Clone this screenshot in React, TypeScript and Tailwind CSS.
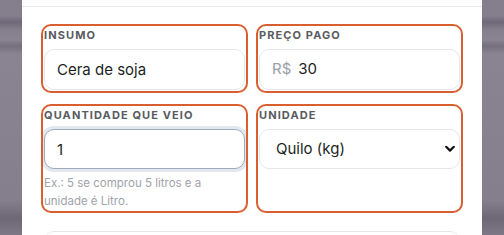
import { useState } from 'react'

const font = { fontFamily: 'Inter, "Noto Sans", sans-serif' }

function Chevron() {
  return (
    <svg width="10" height="7" viewBox="0 0 10 7" className="pointer-events-none absolute right-[5px] top-1/2 -translate-y-1/2">
      <path d="M1.2 1.3 5 5.1 8.8 1.3" fill="none" stroke="#111" strokeWidth="2.2" strokeLinecap="round" strokeLinejoin="round" />
    </svg>
  )
}

export default function App() {
  const [insumo, setInsumo] = useState('Cera de soja')
  const [preco, setPreco] = useState('30')
  const [qtd, setQtd] = useState('1')
  const [unidade, setUnidade] = useState('kg')

  const fieldBox = 'rounded-[7px] outline-[2.5px] outline-offset-[1.5px] outline-[#d95f30]'
  const labelCls = 'block text-[11px] leading-4 font-bold tracking-[0.1em] text-[#585b61] uppercase mb-[6px]'
  const inputCls =
    'h-[41px] w-full rounded-[10px] border border-[#e6e7ea] bg-white px-[12px] text-[15px] text-[#1c1f24] outline-none'

  return (
    <div
      style={font}
      className="h-[235px] w-[504px] overflow-hidden bg-[linear-gradient(180deg,#857e8c_0px,#857e8c_16px,#6f6879_22px,#857e8c_30px,#8a8391_40px,#75707d_46px,#8a8391_54px,#857e8c_200px,#6e6876_218px,#7f7886_235px)]"
    >
      <div className="mx-[22px] h-full bg-white">
        <div className="h-[7px] border-b border-[#e8e9ec]" />
        <div className="px-[22px] pt-[20px]">
          <div className="grid grid-cols-2 gap-x-[14px] gap-y-[17px]">
            <div className={fieldBox}>
              <label className={labelCls}>Insumo</label>
              <input className={inputCls} value={insumo} onChange={(e) => setInsumo(e.target.value)} />
            </div>

            <div className={fieldBox}>
              <label className={labelCls}>Preço pago</label>
              <div className="flex h-[41px] items-center rounded-[10px] border border-[#e6e7ea] bg-white px-[12px] text-[15px]">
                <span className="mr-[7px] text-[#9a9ea6]">R$</span>
                <input
                  className="w-full text-[#1c1f24] outline-none"
                  value={preco}
                  onChange={(e) => setPreco(e.target.value)}
                />
              </div>
            </div>

            <div className={fieldBox}>
              <label className={labelCls}>Quantidade que veio</label>
              <input
                className="h-10 w-full rounded-[10px] border border-[#9eabbe] bg-white px-[12px] text-[15px] text-[#1c1f24] outline-none ring-[3px] ring-[#e3e8ef]"
                value={qtd}
                onChange={(e) => setQtd(e.target.value)}
              />
              <p className="mt-[5px] text-[11.5px] leading-[18px] text-[#a0a3a9]">
                Ex.: 5 se comprou 5 litros e a unidade é Litro.
              </p>
            </div>

            <div className={fieldBox}>
              <label className={labelCls}>Unidade</label>
              <div className="relative">
                <select
                  className="h-10 w-full appearance-none rounded-[10px] border border-[#e6e7ea] bg-white pl-[16px] text-[15px] text-[#1c1f24] outline-none"
                  value={unidade}
                  onChange={(e) => setUnidade(e.target.value)}
                >
                  <option value="kg">Quilo (kg)</option>
                  <option value="g">Grama (g)</option>
                  <option value="l">Litro (L)</option>
                  <option value="ml">Mililitro (ml)</option>
                  <option value="un">Unidade</option>
                </select>
                <Chevron />
              </div>
            </div>
          </div>

          <div className="mt-[21px] h-10 rounded-[10px] border border-[#e6e7ea] bg-white" />
        </div>
      </div>
    </div>
  )
}
